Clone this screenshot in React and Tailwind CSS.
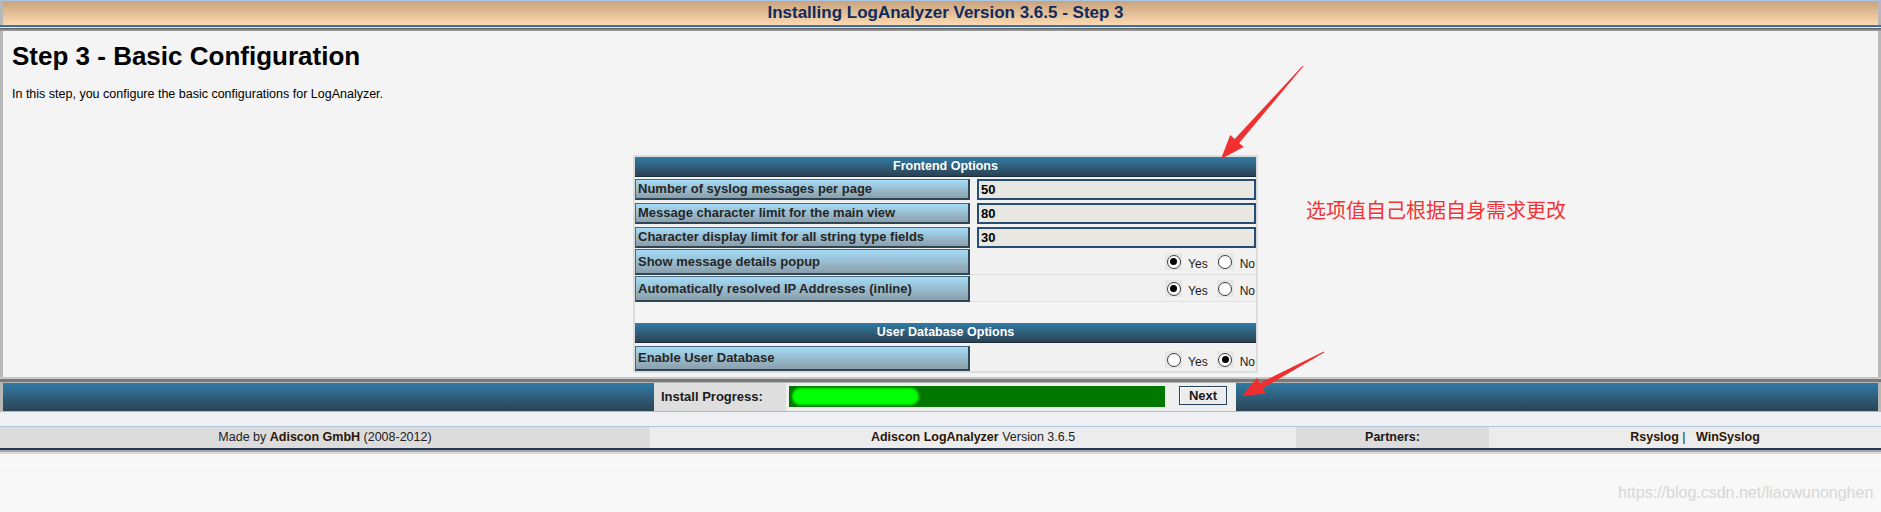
import React from 'react';

const Radio = ({ checked }) => (
  <span className="w-[17px] h-[17px] bg-[#e6e6e6] flex items-center justify-center">
    <span className="w-[14px] h-[14px] rounded-full border border-[#3a3a3a] bg-white flex items-center justify-center">
      {checked && <span className="w-[7px] h-[7px] rounded-full bg-black"></span>}
    </span>
  </span>
);

const Label = ({ children, h = 'h-[21px]' }) => (
  <div className={`w-[335px] ${h} shrink-0 bg-gradient-to-b from-[#a5dcf7] to-[#8b9fab] border border-[#4b667a] border-b-2 border-r-2 border-b-[#2e4556] border-r-[#2e4556] flex items-center px-[2px] text-[13px] font-bold text-[#262626] whitespace-nowrap`}>
    {children}
  </div>
);

const InputRow = ({ label, value }) => (
  <div className="flex gap-[7px]">
    <Label>{label}</Label>
    <div className="flex-1 h-[21px] border-2 border-[#274e72] bg-[#e8e7e2] flex items-center pl-[2px] text-[13px] font-bold text-black">
      {value}
    </div>
  </div>
);

const RadioGroup = ({ yes, pb = 'pb-[4px]' }) => (
  <div className={`flex-1 flex items-end justify-end ${pb} pr-[1px] text-[12px] leading-[12px] text-[#1a1a1a]`}>
    <Radio checked={yes} />
    <span className="ml-[6px]">Yes</span>
    <span className="ml-[9px]"><Radio checked={!yes} /></span>
    <span className="ml-[6px]">No</span>
  </div>
);

const RadioRow = ({ label, yes }) => (
  <div className="flex gap-[7px] h-[26px] border-b border-[#e0e0e0]">
    <Label h="h-[26px]">{label}</Label>
    <RadioGroup yes={yes} />
  </div>
);

const SectionHeader = ({ children }) => (
  <div className="h-[20px] bg-gradient-to-b from-[#307ca7] to-[#2a4252] border-b border-[#1e2f3a] flex items-center justify-center text-white font-bold text-[12.5px]">
    {children}
  </div>
);

export default function App() {
  return (
    <div className="relative w-[1881px] h-[512px] overflow-hidden bg-[#f8f8f8] font-['Liberation_Sans',Arial,sans-serif]">
      {/* Title bar */}
      <div className="h-[25px] border-t border-[#a9c6e3] border-x-[3px] border-x-[#b8b8b8] bg-gradient-to-b from-[#c8a37e] to-[#fdd9b1] flex items-center justify-center">
        <span className="text-[17px] font-bold text-[#0d2b5c] pl-[10px]">Installing LogAnalyzer Version 3.6.5 - Step 3</span>
      </div>
      <div className="h-[2px] bg-[#3d6ea8]"></div>
      <div className="h-[1px] bg-[#dfe6ee]"></div>
      <div className="h-[3px] bg-gradient-to-b from-[#5c5c5c] to-[#a8a8a8]"></div>

      {/* Content */}
      <div className="h-[346px] bg-[#f4f4f4] border-x-[3px] border-[#b8b8b8] pt-[10px]">
        <h1 className="pl-[9px] text-[26px] leading-[30px] font-bold text-black">Step 3 - Basic Configuration</h1>
        <p className="mt-[15px] pl-[9px] text-[12.5px] leading-[16px] text-black">
          In this step, you configure the basic configurations for LogAnalyzer.
        </p>

        <div className="mt-[53px] ml-[630px] w-[625px] border-2 border-[#dcdcdc] bg-[#f1f1f1]">
          <SectionHeader>Frontend Options</SectionHeader>
          <div className="flex flex-col gap-[3px] pt-[2px]">
            <InputRow label="Number of syslog messages per page" value="50" />
            <InputRow label="Message character limit for the main view" value="80" />
            <InputRow label="Character display limit for all string type fields" value="30" />
          </div>
          <div className="flex flex-col gap-[1px] pt-[1px]">
            <RadioRow label="Show message details popup" yes />
            <RadioRow label="Automatically resolved IP Addresses (inline)" yes />
          </div>
          <div className="h-[21px] bg-[#f4f4f4]"></div>
          <SectionHeader>User Database Options</SectionHeader>
          <div className="pt-[3px]">
            <div className="flex gap-[7px] h-[25px]">
              <Label h="h-[25px]">Enable User Database</Label>
              <RadioGroup yes={false} pb="pb-[3px]" />
            </div>
          </div>
        </div>
      </div>

      {/* Separator */}
      <div className="h-[2px] bg-[#c8c8c8]"></div>
      <div className="h-[3px] bg-[#7a7a7a]"></div>
      <div className="h-[1px] bg-[#b4b4b4]"></div>

      {/* Install progress */}
      <div className="h-[28px] flex border-x-[3px] border-[#b8b8b8]">
        <div className="w-[651px] bg-gradient-to-b from-[#2f7aa5] to-[#2a4454]"></div>
        <div className="w-[132px] bg-[#dedede] flex items-center pl-[7px] text-[13px] font-bold text-[#1a1a1a]">Install Progress:</div>
        <div className="w-[382px] bg-[#efefef] pt-[3px] px-[3px]">
          <div className="h-[21px] bg-[#007800] flex items-center pl-[3px]">
            <div className="w-[127px] h-[17px] rounded-full bg-[#00ff00] blur-[1px]"></div>
          </div>
        </div>
        <div className="w-[68px] bg-[#efefef] pt-[3px] pl-[11px]">
          <div className="w-[48px] h-[19px] border border-[#27425e] shadow-[inset_1px_1px_0_#ffffff] bg-[#ececec] flex items-center justify-center text-[13px] font-bold text-[#1a1a1a]">Next</div>
        </div>
        <div className="flex-1 bg-gradient-to-b from-[#2f7aa5] to-[#2a4454]"></div>
      </div>
      <div className="h-[1px] bg-[#b8b8b8]"></div>
      <div className="h-[15px] bg-[#eef0f4] border-b border-[#b0c4de]"></div>

      {/* Footer */}
      <div className="h-[21px] flex text-[12.5px] text-[#222]">
        <div className="w-[650px] bg-[#dcdcdc] flex items-center justify-center">
          Made by&nbsp;<b className="text-[#2b1608]">Adiscon GmbH</b>&nbsp;(2008-2012)
        </div>
        <div className="w-[646px] bg-[#ececec] flex items-center justify-center">
          <b className="text-[#2b1608]">Adiscon LogAnalyzer</b>&nbsp;Version 3.6.5
        </div>
        <div className="w-[193px] bg-[#dcdcdc] flex items-center justify-center font-bold text-[#1a1a1a]">Partners:</div>
        <div className="flex-1 bg-[#ececec] flex items-center justify-center pl-[20px]">
          <b className="text-[#2b1608]">Rsyslog</b>&nbsp;|&nbsp;&nbsp;&nbsp;<b className="text-[#2b1608]">WinSyslog</b>
        </div>
      </div>
      <div className="h-[2px] bg-[#1f3a58]"></div>
      <div className="h-[2px] bg-[#a4a4a4]"></div>
      <div className="h-[2px] bg-[#dadada]"></div>
      <div className="h-[16px]"></div>
      <div className="h-[1px] bg-[#efefef]"></div>

      {/* Annotations */}
      <div className="absolute left-[1306px] top-[198px] text-[20px] leading-[24px] text-[#f03434] font-['Noto_Sans_CJK_SC',sans-serif] font-normal">
        选项值自己根据自身需求更改
      </div>
      <div className="absolute left-[1618px] top-[483px] text-[16px] leading-[20px] text-[#d6d6d6]">
        https://blog.csdn.net/liaowunonghen
      </div>
      <svg className="absolute left-0 top-0 pointer-events-none" width="1881" height="512">
        <polygon
          fill="#f03030"
          points="1303.4,66.3 1239.2,143.0 1243.7,146.9 1221,159 1230.2,135.1 1234.7,139.0 1302.6,65.7"
        />
        <polygon
          fill="#f03030"
          points="1324.2,352.4 1262.8,388.2 1265.7,393.5 1242,396 1257.1,377.7 1260.0,383.0 1323.8,351.6"
        />
      </svg>
    </div>
  );
}
